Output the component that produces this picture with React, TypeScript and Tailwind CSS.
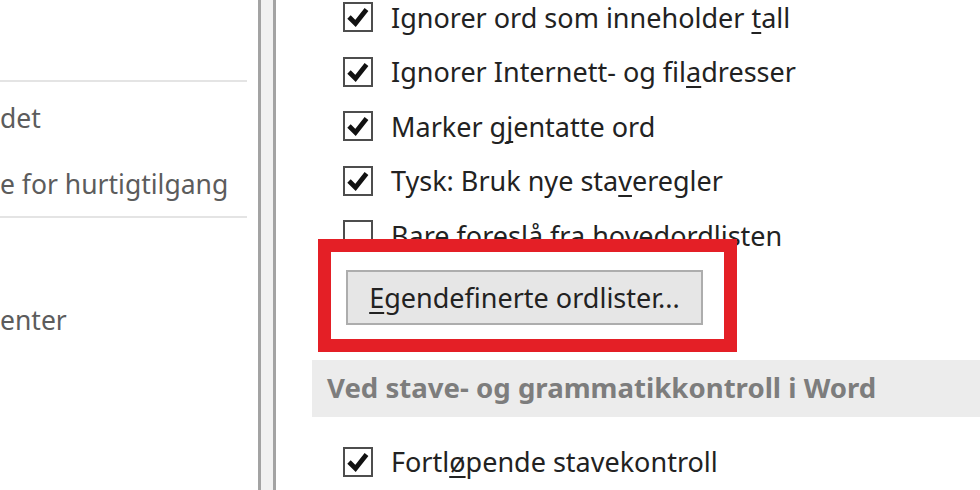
import React from 'react';

const font = { fontFamily: '"Noto Sans", "Open Sans", sans-serif' };

function Check({ checked }: { checked: boolean }) {
  return (
    <div className="w-[30px] h-[30px] border-[2px] border-[#4d4d4d] bg-white shrink-0 flex items-center justify-center">
      {checked && (
        <svg viewBox="0 0 26 26" className="w-[26px] h-[26px]">
          <path d="M4 13 L10.5 19.5 L21.5 5.5" fill="none" stroke="#111" strokeWidth="4.8" strokeLinejoin="miter" />
        </svg>
      )}
    </div>
  );
}

// option row: label can carry an underlined access key
function Row({ checked, label }: { checked: boolean; label: React.ReactNode }) {
  return (
    <div className="h-[54.5px] flex items-center pl-[67px]">
      <Check checked={checked} />
      <span className="ml-[18px] text-[27px] text-[#222] whitespace-nowrap leading-none">{label}</span>
    </div>
  );
}

const U = ({ children }: { children: React.ReactNode }) => (
  <span className="underline decoration-[2px] underline-offset-[4px] [text-decoration-skip-ink:none]">{children}</span>
);

export default function App() {
  return (
    <div className="w-[980px] h-[490px] bg-white flex overflow-hidden" style={font}>
      {/* left nav (clipped) */}
      <div className="w-[258px] shrink-0 pr-[11px] text-[26.5px] text-[#5c5c5c] leading-none">
        <div className="h-[80px]" />
        <div className="h-[2px] bg-[#e4e4e4]" />
        <div className="h-[70px] flex items-center pt-[3px]">det</div>
        <div className="h-[64px] flex items-center">e for hurtigtilgang</div>
        <div className="h-[2px] bg-[#e4e4e4]" />
        <div className="h-[68px]" />
        <div className="h-[68px] flex items-center">enter</div>
      </div>

      {/* splitter */}
      <div className="w-[18px] shrink-0 bg-[#f1f1f1] border-x-[3px] border-[#a3a3a3]" />

      {/* options */}
      <div className="flex-1 flex flex-col">
        <div className="-mt-[10px]">
          <Row checked label={<>Ignorer ord som inneholder <U>t</U>all</>} />
          <Row checked label={<>Ignorer Internett- og fil<U>a</U>dresser</>} />
          <Row checked label={<>Marker g<U>j</U>entatte ord</>} />
          <Row checked label={<>Tysk: Bruk nye sta<U>v</U>eregler</>} />
          <Row checked={false} label="Bare foreslå fra hovedordlisten" />
        </div>

        <div className="relative ml-[70px] mt-[7px] w-[357px]">
          <button className="w-[357px] h-[55px] border-[2px] border-[#adadad] bg-[#e6e6e6] text-[27px] text-[#222] leading-none" style={font}>
            <U>E</U>gendefinerte ordlister...
          </button>
          {/* red highlight frame */}
          <div className="absolute left-[-28px] top-[-31px] w-[419px] h-[113px] border-[13px] border-[#e41f26] pointer-events-none" />
        </div>

        <div className="ml-[36px] mt-[35px] h-[57px] bg-[#ececec] flex items-center pl-[15px]">
          <span className="text-[27.6px] font-bold text-[#7d7d7d] whitespace-nowrap leading-none">
            Ved stave- og grammatikkontroll i Word
          </span>
        </div>

        <div className="mt-[18px]">
          <Row checked label={<>Fortl<U>ø</U>pende stavekontroll</>} />
        </div>
      </div>
    </div>
  );
}
